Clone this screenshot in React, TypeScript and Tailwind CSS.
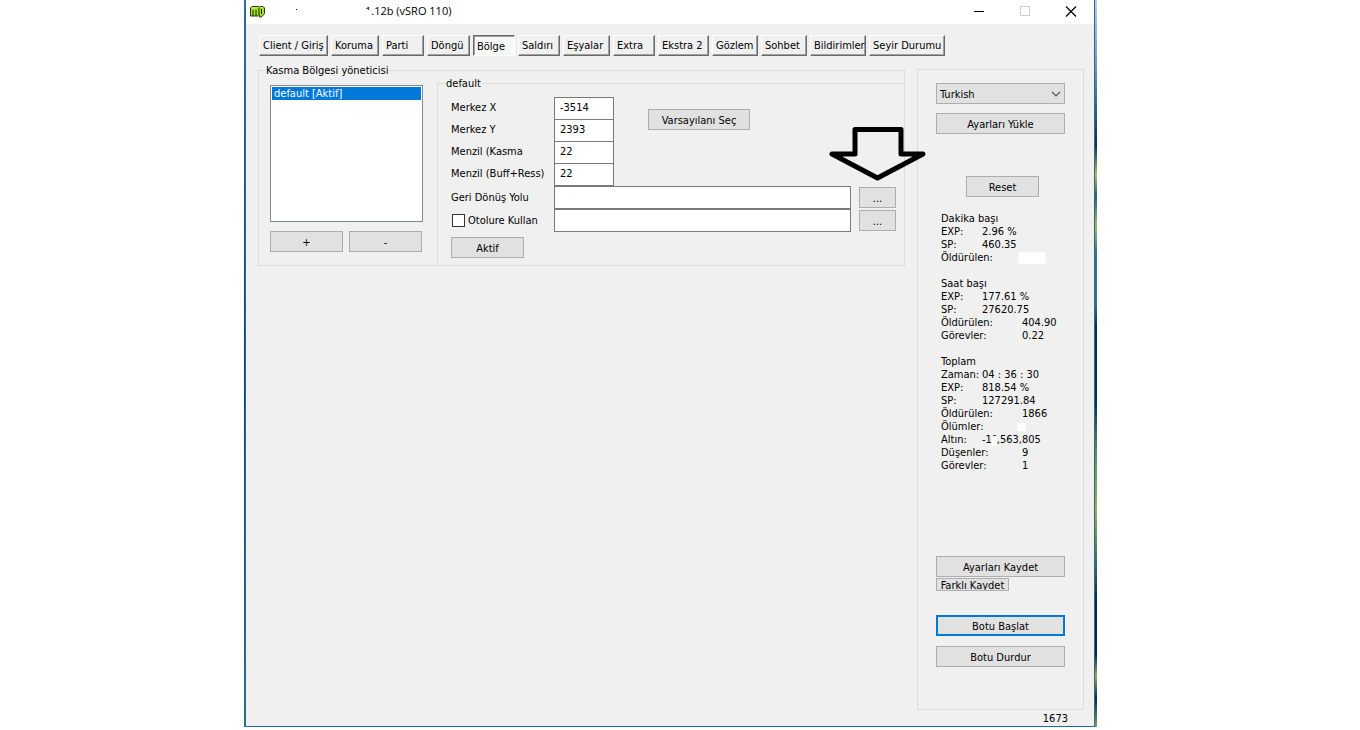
import { useState } from 'react';
import type { ReactNode } from 'react';

const tabs = [
  { label: 'Client / Giriş', width: 'w-[69px]' },
  { label: 'Koruma', width: 'w-[48px]' },
  { label: 'Parti', width: 'w-[42px]' },
  { label: 'Döngü', width: 'w-[43px]' },
  { label: 'Bölge', width: 'w-[42px]' },
  { label: 'Saldırı', width: 'w-[42px]' },
  { label: 'Eşyalar', width: 'w-[47px]' },
  { label: 'Extra', width: 'w-[42px]' },
  { label: 'Ekstra 2', width: 'w-[51px]' },
  { label: 'Gözlem', width: 'w-[46px]' },
  { label: 'Sohbet', width: 'w-[46px]' },
  { label: 'Bildirimler', width: 'w-[56px]' },
  { label: 'Seyir Durumu', width: 'w-[76px]' },
];

const coordinates = [
  { id: 'center-x', label: 'Merkez X', value: '-3514' },
  { id: 'center-y', label: 'Merkez Y', value: '2393' },
  { id: 'range-attack', label: 'Menzil (Kasma', value: '22' },
  { id: 'range-buff', label: 'Menzil (Buff+Ress)', value: '22' },
];

type Stat = { label: string; value: ReactNode; wide?: boolean };

const stats: { title: string; rows: Stat[] }[] = [
  {
    title: 'Dakika başı',
    rows: [
      { label: 'EXP:', value: '2.96 %' },
      { label: 'SP:', value: '460.35' },
      { label: 'Öldürülen:', value: <Blot className="-ml-1 h-3 w-7 rounded-[4px]" />, wide: true },
    ],
  },
  {
    title: 'Saat başı',
    rows: [
      { label: 'EXP:', value: '177.61 %' },
      { label: 'SP:', value: '27620.75' },
      { label: 'Öldürülen:', value: '404.90', wide: true },
      { label: 'Görevler:', value: '0.22', wide: true },
    ],
  },
  {
    title: 'Toplam',
    rows: [
      { label: 'Zaman:', value: '04 : 36 : 30' },
      { label: 'EXP:', value: '818.54 %' },
      { label: 'SP:', value: '127291.84' },
      { label: 'Öldürülen:', value: '1866', wide: true },
      { label: 'Ölümler:', value: <Blot className="-ml-1 h-2 w-2" />, wide: true },
      {
        label: 'Altın:',
        value: (
          <>
            -1<span className="bg-linear-to-b from-transparent from-40% to-white to-40%">¯</span>,563,805
          </>
        ),
      },
      { label: 'Düşenler:', value: '9', wide: true },
      { label: 'Görevler:', value: '1', wide: true },
    ],
  },
];

function Blot({ className }: { className: string }) {
  return <span className={`inline-block bg-white align-middle ${className}`} />;
}

function PushButton({ children, className }: { children: ReactNode; className: string }) {
  return (
    <button
      type="button"
      className={`flex shrink-0 items-center justify-center overflow-hidden whitespace-nowrap bg-[#e1e1e1] ${className}`}
    >
      {children}
    </button>
  );
}

function TitleBar() {
  return (
    <header className="flex h-6 items-center bg-white pb-[2px] pl-1 pr-[17px]">
      <svg width="15" height="13" viewBox="0 0 15 13" aria-hidden="true">
        <path d="M.5 3L2 1.500h6.500l1 .5L11 1.500h2L14.500 3v5.500L11.500 12H9.500V10L8.500 11H.5z" fill="#a4e02c" stroke="#27400a" />
        <path d="M3 11V5M6 11V4.500M9 3v7M11.500 4v5" stroke="#1c3005" fill="none" />
        <path d="M2 3h5M10.500 2.500h2" stroke="#dcfa7a" fill="none" />
      </svg>
      <span className="mb-1 ml-[31px] size-px bg-black" />
      <h1 className="relative ml-[68px] font-['Open_Sans',sans-serif] text-[11px] leading-4 text-black">
        1.12b (vSRO 110)
        <span className="absolute -left-px top-[7px] h-2 w-[6px] bg-white" />
      </h1>
      <div className="ml-auto flex items-center gap-[35px]">
        <button type="button" aria-label="Simge durumuna küçült">
          <svg width="11" height="11" viewBox="0 0 11 11">
            <path d="M0 5.500h10" stroke="#000" />
          </svg>
        </button>
        <button type="button" aria-label="Ekranı kapla">
          <svg width="10" height="10" viewBox="0 0 10 10">
            <path d="M.5.5h9v9h-9z" stroke="#ccc" fill="none" />
          </svg>
        </button>
        <button type="button" aria-label="Kapat">
          <svg width="12" height="11" viewBox="0 0 12 11">
            <path d="M1 .5l10 10M11 .5L1 10.500" stroke="#000" strokeWidth="1.200" />
          </svg>
        </button>
      </div>
    </header>
  );
}

function Tabs() {
  const [active, setActive] = useState('Bölge');
  return (
    <nav className="flex gap-[3px] pl-[13px] pt-[11px]">
      {tabs.map((tab) => (
        <button
          key={tab.label}
          type="button"
          onClick={() => setActive(tab.label)}
          className={`flex h-[21px] items-center whitespace-nowrap border pl-[3px] ${tab.width} ${
            tab.label === active
              ? 'border-b-white border-l-[#696969] border-r-white border-t-[#696969] bg-[#f8f8f8] pt-[2px] shadow-[inset_1px_1px_0_#a0a0a0]'
              : 'border-b-[#696969] border-l-white border-r-[#696969] border-t-white shadow-[inset_-1px_-1px_0_#a0a0a0]'
          }`}
        >
          {tab.label}
        </button>
      ))}
    </nav>
  );
}

function DownArrow() {
  return (
    <svg
      width="100"
      height="56"
      viewBox="0 0 100 56"
      className="pointer-events-none absolute -left-8 -top-[62px] z-10"
      aria-hidden="true"
    >
      <path
        d="M28 4.500H74V29H96L50.500 53L5 29H28z"
        fill="none"
        stroke="#000"
        strokeWidth="5"
        strokeLinejoin="round"
      />
    </svg>
  );
}

function AreaSettings() {
  return (
    <fieldset className="min-w-0 flex-1 border-l border-t border-[#dcdcdc] pb-[7px] pl-[13px]">
      <legend className="-ml-[6px] px-px">default</legend>
      <div className="mt-[7px] flex items-start">
        <div className="pb-px">
          {coordinates.map((field) => (
            <div key={field.id} className="flex h-[22px] items-start">
              <label htmlFor={field.id} className="w-[103px] whitespace-nowrap leading-[22px]">
                {field.label}
              </label>
              <input
                id={field.id}
                defaultValue={field.value}
                className="h-[23px] w-[60px] border border-[#7a7a7a] bg-white pb-[2px] pl-[5px]"
              />
            </div>
          ))}
        </div>
        <PushButton className="ml-[34px] mt-3 h-[21px] w-[102px] border border-[#adadad] pt-px">
          Varsayılanı Seç
        </PushButton>
      </div>
      <div className="flex items-center pr-2">
        <label htmlFor="return-path" className="w-[103px]">
          Geri Dönüş Yolu
        </label>
        <input id="return-path" className="h-[23px] min-w-0 flex-1 border border-[#7a7a7a] bg-white px-[5px]" />
        <div className="relative ml-2">
          <PushButton className="h-[21px] w-[37px] border border-[#adadad] pt-px">...</PushButton>
          <DownArrow />
        </div>
      </div>
      <div className="flex items-center pr-2">
        <label className="flex w-[103px] items-center gap-[3px] whitespace-nowrap pl-px">
          <input type="checkbox" className="size-[13px] appearance-none border border-[#333] bg-white checked:bg-[#0078d7]" />
          Otolure Kullan
        </label>
        <input
          aria-label="Otolure yolu"
          className="h-[23px] min-w-0 flex-1 border border-[#7a7a7a] bg-white px-[5px]"
        />
        <PushButton className="ml-2 h-[21px] w-[37px] border border-[#adadad] pt-px">...</PushButton>
      </div>
      <PushButton className="mt-[5px] h-[21px] w-[73px] border border-[#adadad] pt-px">Aktif</PushButton>
    </fieldset>
  );
}

function AreaManager() {
  return (
    <fieldset className="min-w-0 flex-1 self-start border border-[#dcdcdc]">
      <legend className="ml-[6px] px-px">Kasma Bölgesi yöneticisi</legend>
      <div className="flex">
        <div className="ml-[11px] mr-[14px] mt-2 w-[153px]">
          <ul className="h-[137px] border border-[#828790] bg-white p-px">
            <li className="h-[13px] bg-[#0078d7] pl-[2px] leading-[13px] text-white">default [Aktif]</li>
          </ul>
          <div className="mt-[9px] flex gap-[6px]">
            <PushButton className="h-[21px] w-[73px] border border-[#adadad] pt-px">+</PushButton>
            <PushButton className="h-[21px] w-[73px] border border-[#adadad] pt-px">-</PushButton>
          </div>
        </div>
        <AreaSettings />
      </div>
    </fieldset>
  );
}

function SidePanel() {
  return (
    <aside className="mt-[5px] w-[167px] border border-[#dcdcdc] px-[18px] pb-10 pt-[13px]">
      <div className="relative">
        <select
          aria-label="Dil"
          defaultValue="Turkish"
          className="h-[21px] w-full appearance-none border border-[#adadad] bg-[#e1e1e1] pl-[3px] pt-px"
        >
          <option>Turkish</option>
          <option>English</option>
        </select>
        <svg
          width="10"
          height="6"
          viewBox="0 0 10 6"
          className="pointer-events-none absolute right-1 top-2"
          aria-hidden="true"
        >
          <path d="M1 1l4 4 4-4" fill="none" stroke="#555" strokeWidth="1.200" />
        </svg>
      </div>
      <PushButton className="mt-[9px] h-[21px] w-full border border-[#adadad] pt-px">Ayarları Yükle</PushButton>
      <PushButton className="ml-[30px] mt-[42px] h-[21px] w-[73px] border border-[#adadad] pt-px">Reset</PushButton>
      <div className="mt-[15px] flex flex-col gap-[13px] pl-[5px]">
        {stats.map((group) => (
          <section key={group.title}>
            <h2>{group.title}</h2>
            <dl>
              {group.rows.map((row) => (
                <div key={row.label} className="flex h-[13px] whitespace-nowrap">
                  <dt className={row.wide ? 'w-[81px] shrink-0' : 'w-[41px] shrink-0'}>{row.label}</dt>
                  <dd>{row.value}</dd>
                </div>
              ))}
            </dl>
          </section>
        ))}
      </div>
      <PushButton className="mt-[84px] h-[21px] w-full border border-[#adadad] pt-px">Ayarları Kaydet</PushButton>
      <PushButton className="mt-px h-[13px] w-[73px] border border-[#adadad] pt-px">Farklı Kaydet</PushButton>
      <PushButton className="mt-6 h-[21px] w-full border-2 border-[#0078d7] pt-px">Botu Başlat</PushButton>
      <PushButton className="mt-[10px] h-[21px] w-full border border-[#adadad] pt-px">Botu Durdur</PushButton>
    </aside>
  );
}

export default function App() {
  return (
    <div className="flex min-h-screen bg-white pb-[3px] pl-[244px] pr-[263px] font-['DejaVu_Sans_Condensed','DejaVu_Sans',sans-serif] text-[11px] leading-[13px] text-black">
      <div className="w-px bg-linear-to-b from-[#3a6c9c] via-[#0b3c66] to-[#2f7a5c]" />
      <main className="flex min-w-0 flex-1 flex-col border-x border-b border-[#1f6c9e] bg-[#f0f0f0]">
        <TitleBar />
        <Tabs />
        <div className="mt-2 flex flex-1 gap-3 pl-3 pr-[10px]">
          <AreaManager />
          <SidePanel />
        </div>
        <footer className="flex h-4 items-center justify-end pr-[26px]">1673</footer>
      </main>
      <div className="w-[2px] bg-[linear-gradient(#c3ced8,#7d95ab_9%,#456788_14%,#0d3147_20%,#b4c04f_24%,#2e5f66_27%,#a9ba55_31%,#3f7076_35%,#3f7076_42%,#06303f_45%,#06303f_55%,#5f8a55_62%,#9fb04c_70%,#3c6a4a_78%,#06283a_83%,#06283a_90%,#9fb04c_93%,#0a2c3a_96%,#8aa050)]" />
    </div>
  );
}
